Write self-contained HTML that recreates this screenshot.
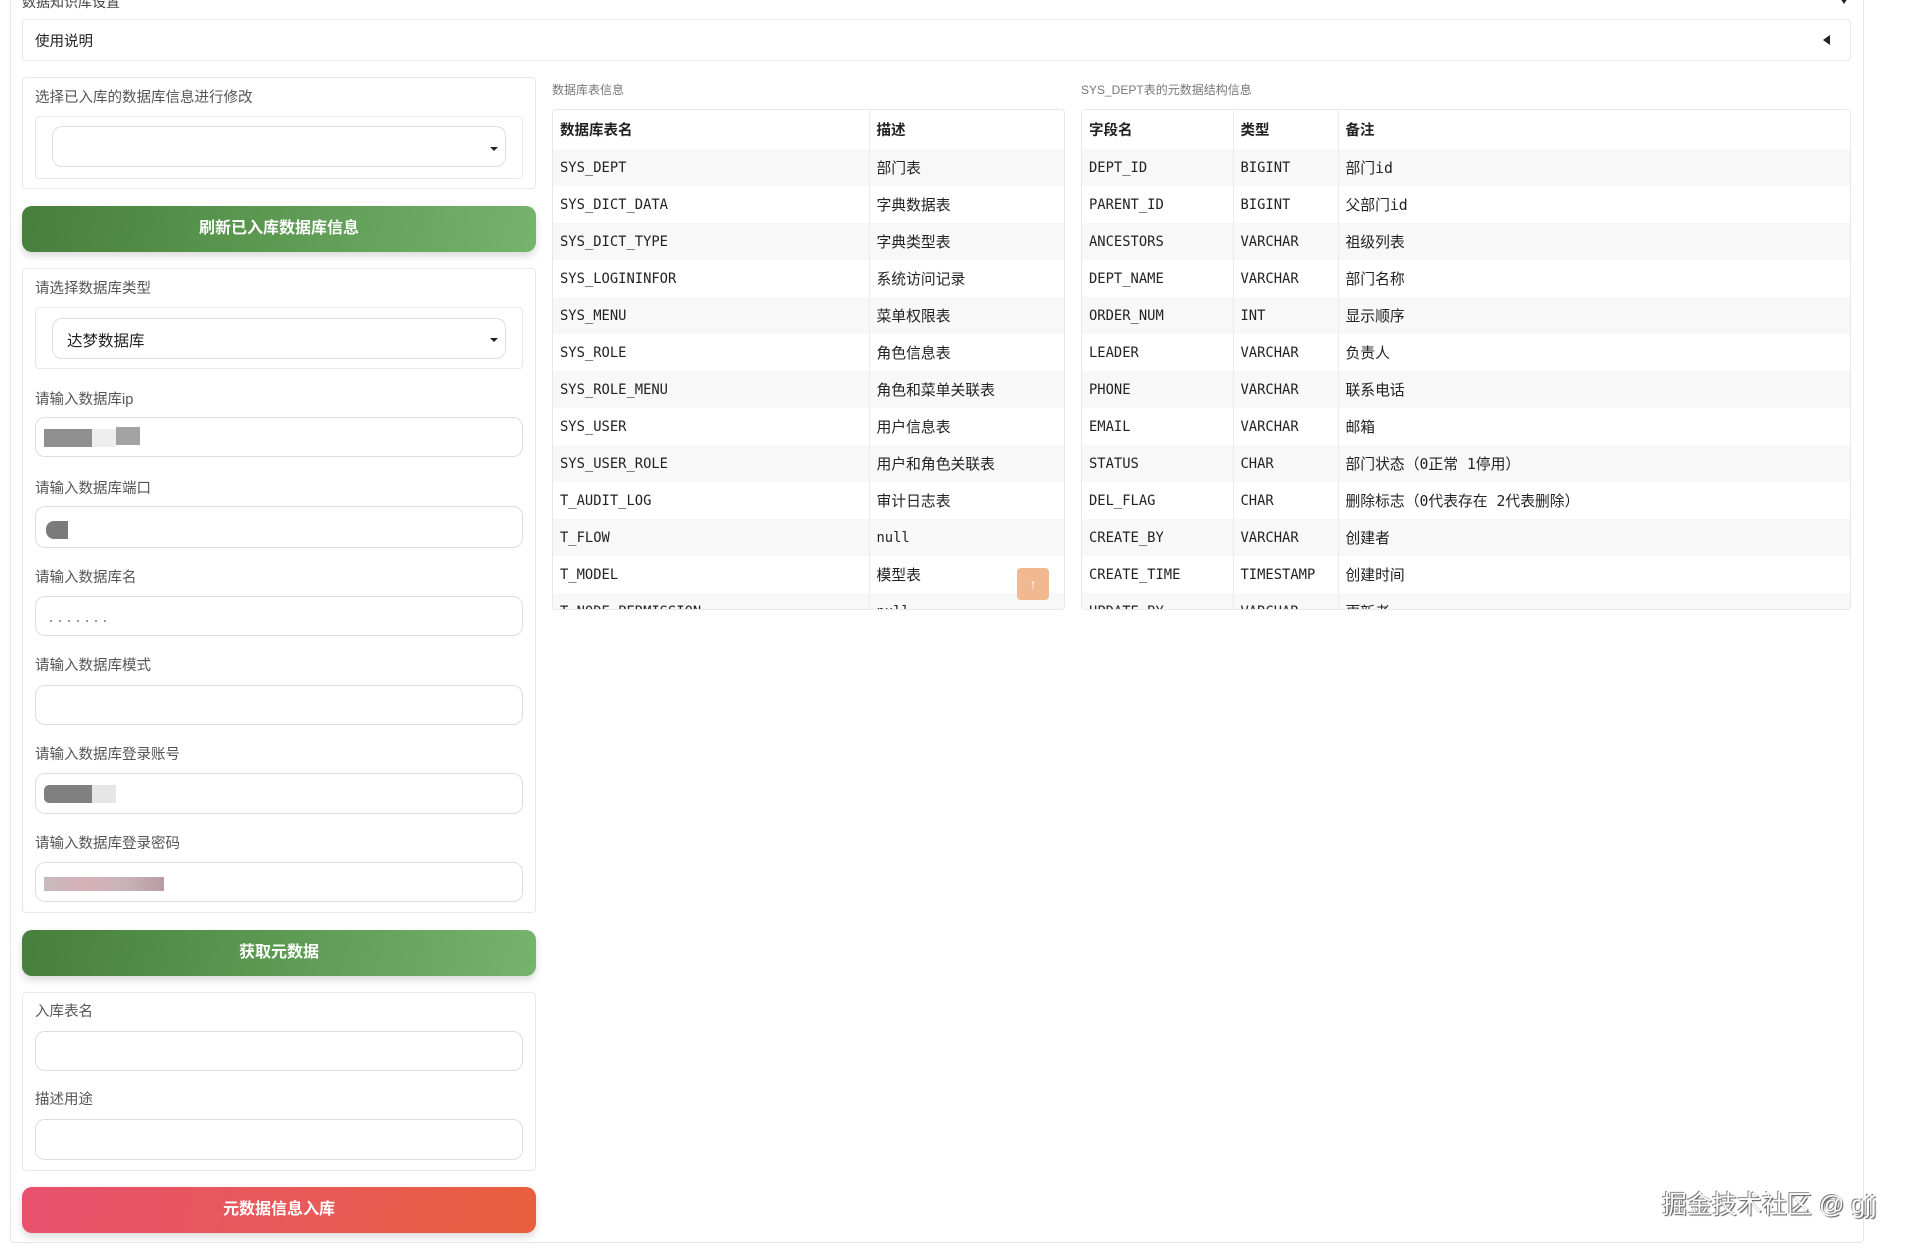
<!DOCTYPE html>
<html><head><meta charset="utf-8"><style>
*{box-sizing:border-box;margin:0;padding:0}
body{width:1908px;height:1250px;overflow:hidden;background:#fff;font-family:"Liberation Sans","Noto Sans CJK SC",sans-serif;color:#333;position:relative}
.a{position:absolute}
.outer{left:10px;top:-10px;width:1854px;height:1253px;border:1px solid #e6e6e6;border-radius:4px}
.box{border:1px solid #e8e8e8;border-radius:4px;background:#fff}
.lbl{font-size:14.5px;color:#555;line-height:18px}
.inp{border:1px solid #dedede;border-radius:10px;background:#fff}
.btn{border-radius:10px;color:#fff;font-weight:bold;font-size:16px;text-align:center;box-shadow:0 4px 8px rgba(0,0,0,.15)}
.g{background:linear-gradient(100deg,#477f3c 0%,#5a9850 45%,#76b46e 100%)}
.r{background:linear-gradient(100deg,#e8506d 0%,#e85a55 60%,#e85f3c 100%)}
.tbl{border:1px solid #e8e8e8;border-radius:4px;overflow:hidden;background:#fff}
table{border-collapse:collapse;width:100%;font-size:14px}
td,th{height:37px;padding:0 7px;text-align:left;vertical-align:middle;white-space:nowrap}
th{height:39px;font-weight:bold;font-size:14.5px;color:#222}
td{font-family:"DejaVu Sans Mono","Noto Sans CJK SC",monospace;font-size:13.8px;color:#222}
td.c{font-size:14.8px}
tr:nth-child(even) td{background:#f8f8f8}
.sep{border-right:1px solid #ececec}
.blk{position:absolute;height:18px}
.arrow{width:0;height:0;border-left:4px solid transparent;border-right:4px solid transparent;border-top:4px solid #222}
</style></head><body>
<div class="a outer"></div>
<div class="a" style="left:22px;top:-8px;font-size:14px;color:#444">数据知识库设置</div>
<div class="a" style="left:1840px;top:-2px;width:0;height:0;border-left:4px solid transparent;border-right:4px solid transparent;border-top:6px solid #222"></div>
<div class="a box" style="left:22px;top:19px;width:1829px;height:42px"></div>
<div class="a" style="left:35px;top:30px;font-size:14.5px;color:#222">使用说明</div>
<div class="a" style="left:1823px;top:35px;width:0;height:0;border-top:5px solid transparent;border-bottom:5px solid transparent;border-right:7px solid #222"></div>

<div class="a box" style="left:22px;top:77px;width:514px;height:112px"></div>
<div class="a lbl" style="left:35px;top:89px">选择已入库的数据库信息进行修改</div>
<div class="a box" style="left:35px;top:116px;width:488px;height:63px"></div>
<div class="a inp" style="left:52px;top:126px;width:454px;height:41px"></div>
<div class="a arrow" style="left:490px;top:147px"></div>
<div class="a btn g" style="left:22px;top:206px;width:514px;height:46px;line-height:46px">刷新已入库数据库信息</div>

<div class="a box" style="left:22px;top:268px;width:514px;height:645px"></div>
<div class="a lbl" style="left:35px;top:280px">请选择数据库类型</div>
<div class="a box" style="left:35px;top:307px;width:488px;height:62px"></div>
<div class="a inp" style="left:52px;top:318px;width:454px;height:41px"></div>
<div class="a" style="left:67px;top:329px;font-size:15.5px;color:#222">达梦数据库</div>
<div class="a arrow" style="left:490px;top:338px"></div>

<div class="a lbl" style="left:35px;top:391px">请输入数据库ip</div>
<div class="a inp" style="left:35px;top:417px;width:488px;height:40px"></div>
<div class="blk" style="left:44px;top:429px;width:48px;background:#8f8f8f"></div>
<div class="blk" style="left:92px;top:429px;width:24px;background:#eee"></div>
<div class="blk" style="left:116px;top:427px;width:24px;background:#a3a3a3"></div>

<div class="a lbl" style="left:35px;top:480px">请输入数据库端口</div>
<div class="a inp" style="left:35px;top:506px;width:488px;height:42px"></div>
<div class="blk" style="left:46px;top:521px;width:22px;background:#7b7b7b;border-radius:8px 0 0 8px"></div>

<div class="a lbl" style="left:35px;top:569px">请输入数据库名</div>
<div class="a inp" style="left:35px;top:596px;width:488px;height:40px"></div>
<div class="a" style="left:50px;top:620px;width:60px;height:2px;background:repeating-linear-gradient(90deg,#999 0 2px,transparent 2px 9px)"></div>

<div class="a lbl" style="left:35px;top:657px">请输入数据库模式</div>
<div class="a inp" style="left:35px;top:685px;width:488px;height:40px"></div>

<div class="a lbl" style="left:35px;top:746px">请输入数据库登录账号</div>
<div class="a inp" style="left:35px;top:773px;width:488px;height:41px"></div>
<div class="blk" style="left:44px;top:785px;width:48px;background:#808080;border-radius:5px 0 0 5px"></div>
<div class="blk" style="left:92px;top:785px;width:24px;background:#e6e6e6"></div>

<div class="a lbl" style="left:35px;top:835px">请输入数据库登录密码</div>
<div class="a inp" style="left:35px;top:862px;width:488px;height:40px"></div>
<div class="blk" style="left:44px;top:877px;width:120px;height:14px;background:linear-gradient(90deg,#c6bcbf,#d6b1b7,#c9b3b8,#b89ba4)"></div>

<div class="a btn g" style="left:22px;top:930px;width:514px;height:46px;line-height:46px">获取元数据</div>

<div class="a box" style="left:22px;top:992px;width:514px;height:179px"></div>
<div class="a lbl" style="left:35px;top:1003px">入库表名</div>
<div class="a inp" style="left:35px;top:1031px;width:488px;height:40px"></div>
<div class="a lbl" style="left:35px;top:1091px">描述用途</div>
<div class="a inp" style="left:35px;top:1119px;width:488px;height:41px"></div>

<div class="a btn r" style="left:22px;top:1187px;width:514px;height:46px;line-height:46px">元数据信息入库</div>

<div class="a" style="left:552px;top:81px;font-size:12px;color:#777">数据库表信息</div>
<div class="a tbl" style="left:552px;top:109px;width:513px;height:501px">
<table>
<tr><th class="sep" style="width:316px">数据库表名</th><th>描述</th></tr>
<tr><td class="sep">SYS_DEPT</td><td class="c">部门表</td></tr>
<tr><td class="sep">SYS_DICT_DATA</td><td class="c">字典数据表</td></tr>
<tr><td class="sep">SYS_DICT_TYPE</td><td class="c">字典类型表</td></tr>
<tr><td class="sep">SYS_LOGININFOR</td><td class="c">系统访问记录</td></tr>
<tr><td class="sep">SYS_MENU</td><td class="c">菜单权限表</td></tr>
<tr><td class="sep">SYS_ROLE</td><td class="c">角色信息表</td></tr>
<tr><td class="sep">SYS_ROLE_MENU</td><td class="c">角色和菜单关联表</td></tr>
<tr><td class="sep">SYS_USER</td><td class="c">用户信息表</td></tr>
<tr><td class="sep">SYS_USER_ROLE</td><td class="c">用户和角色关联表</td></tr>
<tr><td class="sep">T_AUDIT_LOG</td><td class="c">审计日志表</td></tr>
<tr><td class="sep">T_FLOW</td><td>null</td></tr>
<tr><td class="sep">T_MODEL</td><td class="c">模型表</td></tr>
<tr><td class="sep">T_NODE_PERMISSION</td><td>null</td></tr>
</table></div>
<div class="a" style="left:1017px;top:568px;width:32px;height:32px;border-radius:4px;background:#f0b98f;color:#fff;text-align:center;line-height:32px;font-size:14px">↑</div>

<div class="a" style="left:1081px;top:81px;font-size:12px;color:#777">SYS_DEPT表的元数据结构信息</div>
<div class="a tbl" style="left:1081px;top:109px;width:770px;height:501px">
<table>
<tr><th class="sep" style="width:151px">字段名</th><th class="sep" style="width:105px">类型</th><th>备注</th></tr>
<tr><td class="sep">DEPT_ID</td><td class="sep">BIGINT</td><td class="c">部门id</td></tr>
<tr><td class="sep">PARENT_ID</td><td class="sep">BIGINT</td><td class="c">父部门id</td></tr>
<tr><td class="sep">ANCESTORS</td><td class="sep">VARCHAR</td><td class="c">祖级列表</td></tr>
<tr><td class="sep">DEPT_NAME</td><td class="sep">VARCHAR</td><td class="c">部门名称</td></tr>
<tr><td class="sep">ORDER_NUM</td><td class="sep">INT</td><td class="c">显示顺序</td></tr>
<tr><td class="sep">LEADER</td><td class="sep">VARCHAR</td><td class="c">负责人</td></tr>
<tr><td class="sep">PHONE</td><td class="sep">VARCHAR</td><td class="c">联系电话</td></tr>
<tr><td class="sep">EMAIL</td><td class="sep">VARCHAR</td><td class="c">邮箱</td></tr>
<tr><td class="sep">STATUS</td><td class="sep">CHAR</td><td class="c">部门状态（0正常 1停用）</td></tr>
<tr><td class="sep">DEL_FLAG</td><td class="sep">CHAR</td><td class="c">删除标志（0代表存在 2代表删除）</td></tr>
<tr><td class="sep">CREATE_BY</td><td class="sep">VARCHAR</td><td class="c">创建者</td></tr>
<tr><td class="sep">CREATE_TIME</td><td class="sep">TIMESTAMP</td><td class="c">创建时间</td></tr>
<tr><td class="sep">UPDATE_BY</td><td class="sep">VARCHAR</td><td class="c">更新者</td></tr>
</table></div>

<div class="a" style="left:1662px;top:1185px;font-size:25px;color:#fff;text-shadow:1px 1px 1px #555,-1px -1px 0 #888;white-space:nowrap">掘金技术社区 @ gjj</div>
</body></html>
